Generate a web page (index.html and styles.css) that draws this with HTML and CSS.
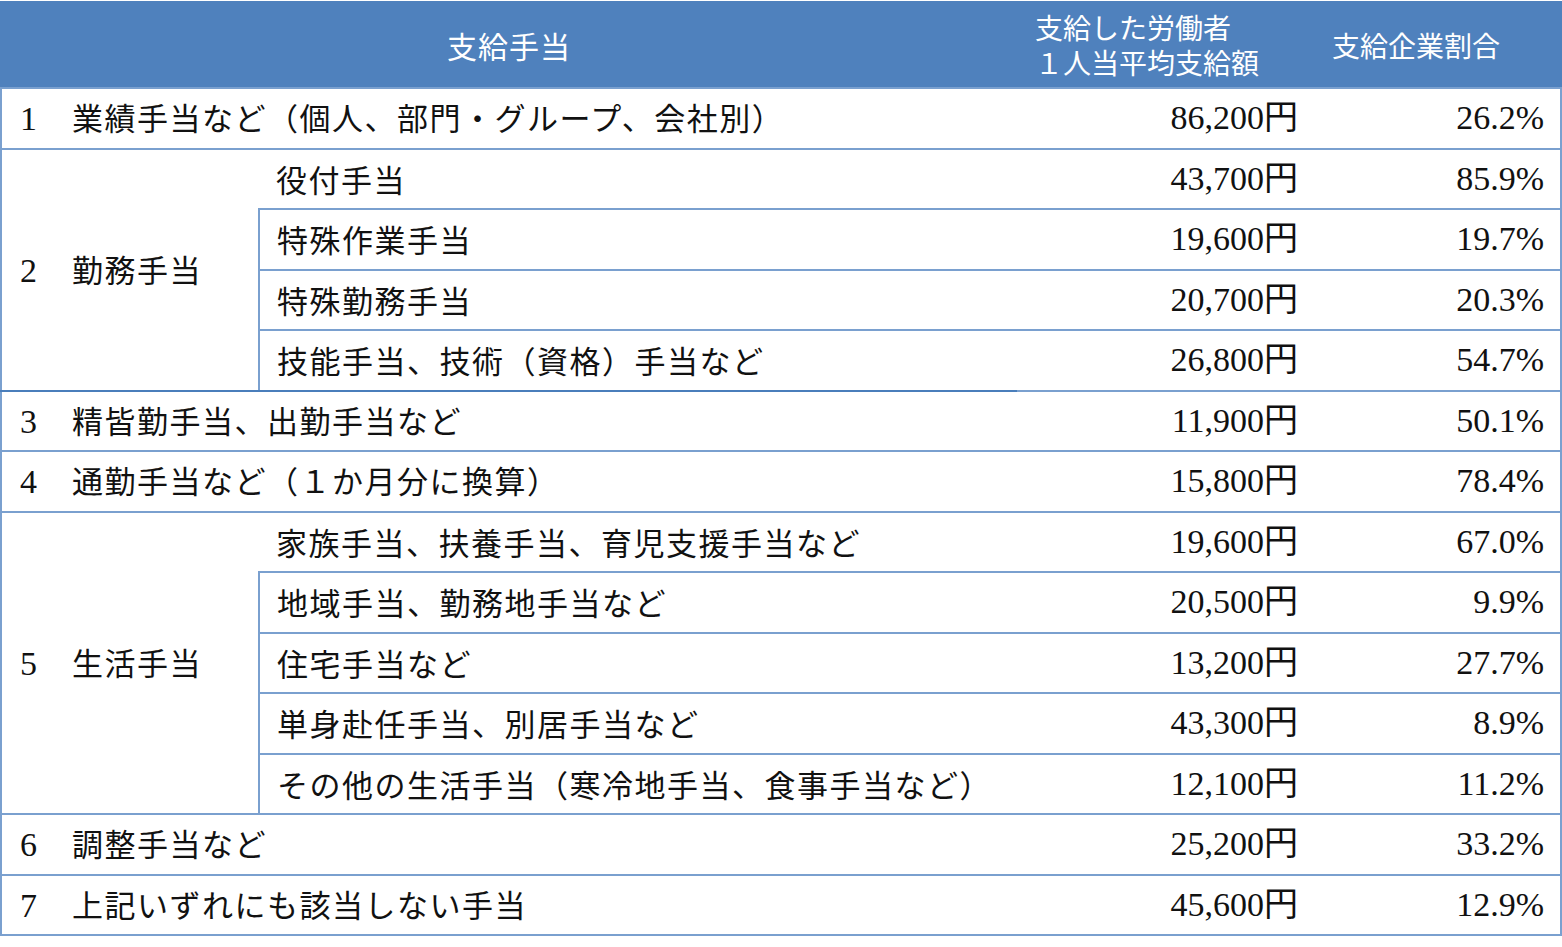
FILE: index.html
```html
<!DOCTYPE html>
<html lang="ja">
<head>
<meta charset="utf-8">
<title>支給手当</title>
<link rel="stylesheet" href="styles.css">
</head>
<body>
<table class="allow">
  <colgroup>
    <col class="c-main">
    <col class="c-sub">
    <col class="c-amt">
    <col class="c-pct">
  </colgroup>
  <thead>
    <tr class="head">
      <th colspan="2" class="h-name">支給手当</th>
      <th class="h-amt"><span class="hl">支給した労働者</span><span class="hl">１人当平均支給額</span></th>
      <th class="h-pct">支給企業割合</th>
    </tr>
  </thead>
  <tbody>
    <tr>
      <td colspan="2"><span class="no">1</span>業績手当など（個人、部門・グループ、会社別）</td>
      <td class="amt">86,200円</td><td class="pct">26.2%</td>
    </tr>
    <tr>
      <td rowspan="4" class="grp dark"><span class="no">2</span>勤務手当</td>
      <td class="sub">役付手当</td>
      <td class="amt">43,700円</td><td class="pct">85.9%</td>
    </tr>
    <tr>
      <td class="sub">特殊作業手当</td>
      <td class="amt">19,600円</td><td class="pct">19.7%</td>
    </tr>
    <tr>
      <td class="sub">特殊勤務手当</td>
      <td class="amt">20,700円</td><td class="pct">20.3%</td>
    </tr>
    <tr>
      <td class="sub dark">技能手当、技術（資格）手当など</td>
      <td class="amt">26,800円</td><td class="pct">54.7%</td>
    </tr>
    <tr>
      <td colspan="2"><span class="no">3</span>精皆勤手当、出勤手当など</td>
      <td class="amt">11,900円</td><td class="pct">50.1%</td>
    </tr>
    <tr>
      <td colspan="2"><span class="no">4</span>通勤手当など（１か月分に換算）</td>
      <td class="amt">15,800円</td><td class="pct">78.4%</td>
    </tr>
    <tr>
      <td rowspan="5" class="grp"><span class="no">5</span>生活手当</td>
      <td class="sub">家族手当、扶養手当、育児支援手当など</td>
      <td class="amt">19,600円</td><td class="pct">67.0%</td>
    </tr>
    <tr>
      <td class="sub">地域手当、勤務地手当など</td>
      <td class="amt">20,500円</td><td class="pct">9.9%</td>
    </tr>
    <tr>
      <td class="sub">住宅手当など</td>
      <td class="amt">13,200円</td><td class="pct">27.7%</td>
    </tr>
    <tr>
      <td class="sub">単身赴任手当、別居手当など</td>
      <td class="amt">43,300円</td><td class="pct">8.9%</td>
    </tr>
    <tr>
      <td class="sub">その他の生活手当（寒冷地手当、食事手当など）</td>
      <td class="amt">12,100円</td><td class="pct">11.2%</td>
    </tr>
    <tr>
      <td colspan="2"><span class="no">6</span>調整手当など</td>
      <td class="amt">25,200円</td><td class="pct">33.2%</td>
    </tr>
    <tr>
      <td colspan="2"><span class="no">7</span>上記いずれにも該当しない手当</td>
      <td class="amt">45,600円</td><td class="pct">12.9%</td>
    </tr>
  </tbody>
</table>
</body>
</html>
```

FILE: styles.css
```css
html, body {
  margin: 0;
  padding: 0;
  background: #ffffff;
}
body {
  padding-top: 1px;
  font-family: "Liberation Serif", "Noto Sans CJK JP", serif;
  color: #111111;
}
.allow {
  border-collapse: collapse;
  table-layout: fixed;
  width: 1560px;
  margin-left: 0;
}
.c-main { width: 258px; }
.c-sub { width: 758px; }
.c-amt { width: 294px; }
.c-pct { width: 250px; }

.head th {
  background: #4f81bd;
  color: #ffffff;
  font-family: "Noto Sans CJK JP", sans-serif;
  font-weight: 400;
  height: 84px;
  padding: 0;
  border: 2px solid #4f81bd;
  border-bottom: 2px solid #7aa0cf;
  vertical-align: middle;
  line-height: 1;
}
.h-name {
  font-size: 30px;
  text-align: center;
  letter-spacing: 1px;
}
.h-amt {
  font-size: 28px;
  text-align: left;
  padding-left: 17px !important;
}
.hl {
  display: block;
  line-height: 35px;
  height: 35px;
}
.h-pct {
  font-size: 28px;
  text-align: left;
  padding-left: 20px !important;
}

td {
  height: 58.5px;
  padding: 0 0 0 18px;
  font-family: "Noto Sans CJK JP", sans-serif;
  font-size: 31px;
  line-height: 36px;
  letter-spacing: 1.5px;
  border: 2px solid #7aa0cf;
  border-left: none;
  border-right: none;
  vertical-align: middle;
  white-space: nowrap;
}
td:first-child {
  border-left: 2px solid #7aa0cf;
}
td.pct {
  border-right: 2px solid #7aa0cf;
}
td.sub {
  padding-left: 17px;
}
td.dark {
  border-bottom-color: #4a7ebb;
}
.no {
  display: inline-block;
  width: 52px;
  font-family: "Liberation Serif", serif;
  font-size: 34px;
  letter-spacing: 0;
}
td.amt, td.pct {
  font-family: "Liberation Serif", "Noto Sans CJK JP", serif;
  font-size: 34px;
  line-height: 36px;
  letter-spacing: 0;
  text-align: right;
  padding-left: 0;
}
td.amt { padding-right: 13px; }
td.pct { padding-right: 16px; }
```
